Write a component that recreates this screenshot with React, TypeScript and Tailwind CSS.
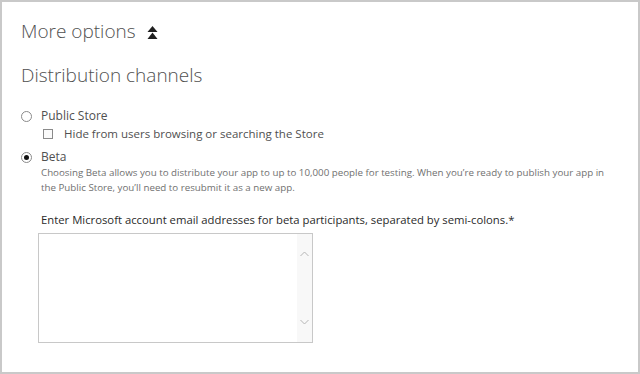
import { useState } from 'react'

function DoubleUp() {
  return (
    <svg width="11" height="13" viewBox="0 0 11 13" className="ml-[11px] mt-[2px]" aria-hidden>
      <path d="M5.5 0 L10.5 6 L0.5 6 Z" fill="#1f1f1f" />
      <path d="M5.5 6.5 L10.5 13 L0.5 13 Z" fill="#1f1f1f" />
    </svg>
  )
}

function Radio({ checked }: { checked: boolean }) {
  return (
    <span className="flex h-[11px] w-[11px] items-center justify-center rounded-full border border-[#8a8a8a] bg-white">
      {checked ? <span className="h-[5px] w-[5px] rounded-full bg-[#111]" /> : null}
    </span>
  )
}

export default function App() {
  const [channel, setChannel] = useState<'public' | 'beta'>('beta')

  return (
    <div
      className="h-[374px] w-[640px] overflow-hidden border-2 border-[#c9c9c9] bg-white text-[#444]"
      style={{ fontFamily: '"Open Sans", "Noto Sans", sans-serif' }}
    >
      <div className="pl-[19px] pt-[16px]">
        <div className="flex items-center">
          <h2 className="text-[19px] font-light leading-[26px] text-[#505050]">More options</h2>
          <DoubleUp />
        </div>

        <h3 className="mt-[18px] text-[19px] font-light leading-[26px] text-[#505050]">Distribution channels</h3>

        <div className="mt-[20px]">
          <button className="flex items-center gap-[9px]" onClick={() => setChannel('public')}>
            <Radio checked={channel === 'public'} />
            <span className="text-[12px] leading-[16px] text-[#505050]">Public Store</span>
          </button>
          <label className="ml-[22px] mt-[2px] flex items-center gap-[11px]">
            <span className="h-[10px] w-[10px] border border-[#8a8a8a] bg-[#fafafa]" />
            <span className="text-[11.5px] leading-[16px] text-[#505050]">Hide from users browsing or searching the Store</span>
          </label>

          <button className="mt-[7px] flex items-center gap-[9px]" onClick={() => setChannel('beta')}>
            <Radio checked={channel === 'beta'} />
            <span className="text-[12px] leading-[16px] text-[#505050]">Beta</span>
          </button>

          <div className="ml-[20px] mt-0">
            <p className="w-[568px] text-[9.75px] leading-[15px] text-[#707070]">
              Choosing Beta allows you to distribute your app to up to 10,000 people for testing. When you’re ready to publish your app in the Public Store, you’ll need to resubmit it as a new app.
            </p>
            <p className="mt-[17px] text-[11.3px] leading-[16px] text-[#2a2a2a]">
              Enter Microsoft account email addresses for beta participants, separated by semi-colons.*
            </p>
            <div className="ml-[-3px] mt-[5px] flex h-[110px] w-[275px] border border-[#c8c8c8] bg-white">
              <div className="flex-1" />
              <div className="flex w-[15px] flex-col items-center justify-between bg-[#f8f8f8] py-[17px]">
                <svg width="9" height="6" viewBox="0 0 9 6" aria-hidden>
                  <path d="M0.5 5 L4.5 1 L8.5 5" fill="none" stroke="#b5b5b5" strokeWidth="1" />
                </svg>
                <svg width="9" height="6" viewBox="0 0 9 6" aria-hidden>
                  <path d="M0.5 1 L4.5 5 L8.5 1" fill="none" stroke="#b5b5b5" strokeWidth="1" />
                </svg>
              </div>
            </div>
          </div>
        </div>
      </div>
    </div>
  )
}
